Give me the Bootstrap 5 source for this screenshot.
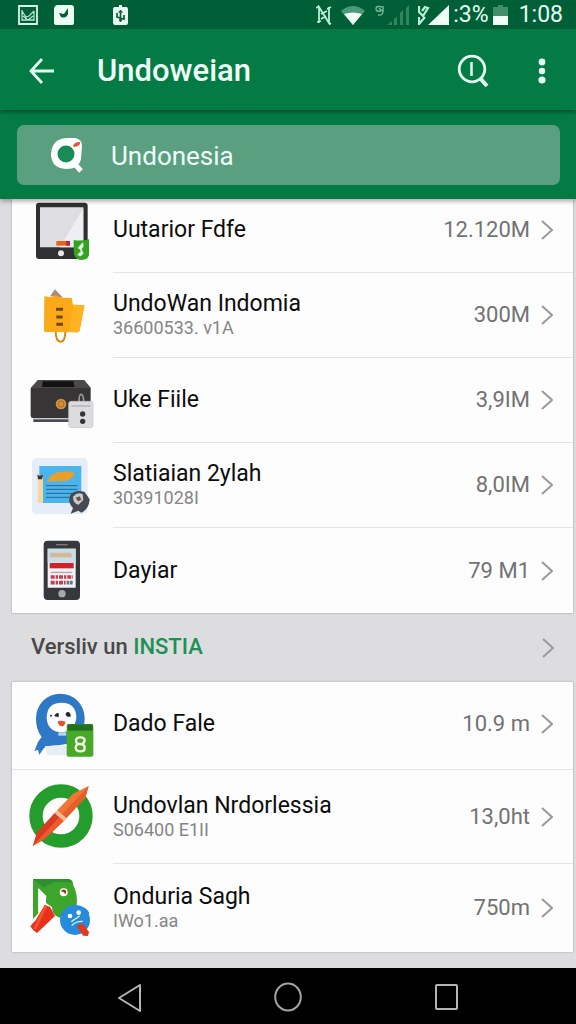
<!DOCTYPE html>
<html lang="id">
<head>
<meta charset="utf-8">
<meta name="viewport" content="width=device-width, initial-scale=1">
<title>Undoweian</title>
<link href="https://cdn.jsdelivr.net/npm/bootstrap@5.3.0/dist/css/bootstrap.min.css" rel="stylesheet">
<style>
  body { font-family: Roboto, "Noto Sans", sans-serif; background: #dddddf; color: #0c0c0c; }
  svg { display: block; flex: none; }
  .status-bar { background: #015f38; height: 29px; padding: 0 13px 0 18px; color: #e4fff2; font-size: 23px; line-height: 26px; }
  .gap-a { margin-left: 39px; }
  .gap-b { margin-left: 8px; }
  .gap-c { margin-left: 11px; }
  .app-bar { background: #047b45; height: 81px; padding: 2px 24px 0 28px; box-shadow: 0 2px 4px rgba(0,40,20,.55); z-index: 2; }
  .app-title { font-size: 31px; line-height: 40px; font-weight: 500; color: #eefff7; margin-left: 42px; }
  .plain-btn { border: 0; background: none; padding: 0; color: #e4fff2; }
  .more-btn { margin-left: 42px; }
  .search-area { background: #047b45; padding: 15px 16px 14px 17px; box-shadow: 0 2px 5px rgba(0,0,0,.35); z-index: 1; }
  .search-box { background: #5a9f80; border-radius: 7px; height: 60px; padding: 2px 32px 0; gap: 26px; }
  .search-box input { border: 0; background: none; outline: 0; color: #f0fff8; font-size: 26px; line-height: 32px; padding: 0; min-width: 0; }
  .panel { background: #fdfdfd; margin: 0 3px 0 12px; box-shadow: 0 0 2px rgba(0,0,0,.3); }
  .app-row { min-height: 85px; padding-left: 17px; gap: 18px; color: inherit; }
  .row-clipped { min-height: 74px; }
  .row-clipped .app-icon { margin: -2px 0 10px; }
  .row-clipped .row-main { padding-bottom: 12px; }
  .row-top { min-height: 88px; border-bottom: 1px solid #e4e4e6; }
  .row-tall { min-height: 94px; }
  .row-end { min-height: 88px; }
  .app-icon { width: 66px; height: 66px; overflow: visible; }
  .row-main { padding-right: 20px; gap: 11px; border-bottom: 1px solid #e4e4e6; }
  .row-top .row-main { padding-bottom: 4px; }
  .row-top .row-main, .row-last .row-main { border-bottom: 0; }
  .app-name { font-size: 23px; line-height: 26px; }
  .app-note { font-size: 18px; line-height: 22px; color: #858585; }
  .app-size { font-size: 22px; line-height: 26px; color: #727272; }
  .section-head { height: 69px; padding: 0 22px 0 31px; font-size: 22px; font-weight: 500; color: #48484a; }
  .brand { color: #1c9257; }
  .page-end { height: 16px; }
  .nav-keys { background: #000; height: 57px; padding: 0 50px; }
</style>
</head>
<body>
<svg width="0" height="0" class="position-absolute" aria-hidden="true">
  <symbol id="chevron" viewBox="0 0 12 20"><path d="M1 1l10 9-10 9" fill="none" stroke="#9a9a9c" stroke-width="2"/></symbol>
</svg>
<div class="d-flex flex-column min-vh-100">

  <div class="status-bar d-flex align-items-center">
    <svg width="20" height="20" viewBox="0 0 20 20"><path d="M1 1h18v18H1z" fill="none" stroke="#d9f7e8" stroke-width="1.8"/><path d="M4 5v10h12V6M4 6l4 6 3-1 5-5M5 11l5 4 5-4" fill="none" stroke="#b5e6ce" stroke-width="1.3"/></svg>
    <svg class="ms-3" width="20" height="20" viewBox="0 0 20 20"><path d="M3 0h14q3 0 3 3v15q0 2-2 2H2q-2 0-2-2V4q0-3 3-4z" fill="#e9fff4"/><path d="M5 8l5 1 4-6 0 6q-2 5-7 3z" fill="#0b5937"/></svg>
    <svg class="me-auto gap-a" width="15" height="20" viewBox="0 0 15 20"><path d="M2 2h4V0h3v2h4q2 0 2 2v14q0 2-2 2H2q-2 0-2-2V4q0-2 2-2z" fill="#e9fff4"/><path d="M7.500 5v12M4 8v4l7 2v-4M5.500 7h4M6 15h3" stroke="#155b3e" fill="none" stroke-width="1.700"/></svg>
    <svg width="16" height="20" viewBox="0 0 16 20"><path d="M3 18V2l10 16V2M0 3l3-2M13 18l2 1M1 17l4-1M11 4l4-2M5 9l6-3M5 14l5-3" fill="none" stroke="#b9f0d6" stroke-width="1.800"/></svg>
    <svg class="gap-b" width="26" height="20" viewBox="0 0 26 20"><path d="M1 6Q13-4 25 6L13 20z" fill="#4e9978"/><path d="M4 9q9-3 18 0l-9 11z" fill="#effff8"/></svg>
    <svg class="gap-b" width="36" height="20" viewBox="0 0 36 20"><path d="M8 2q-6-2-6 2 0 3 5 2M9 1v5q0 5-5 4M5 3l3 3" fill="none" stroke="#7abb9b" stroke-width="1.400"/><path d="M13 20l5-4v4zM20 20v-6l3-2v8zM26 20V8l3-3v15zM32 20V3l3-3v20z" fill="#32865e"/></svg>
    <svg class="gap-b" width="31" height="20" viewBox="0 0 31 20"><path d="M1 1v6l4 4 5-8-3-1-3 4M1 12v7l6-7" fill="none" stroke="#b9f0d6" stroke-width="2.200"/><path d="M31 0v20H10z" fill="#effff8"/></svg>
    <span class="ms-1">:3%</span>
    <svg class="ms-1" width="15" height="20" viewBox="0 0 15 20"><path d="M0 2h5V0h5v2h5v9H0z" fill="#438e6b"/><path d="M0 11h15v9H0z" fill="#effff8"/></svg>
    <span class="gap-c">1:08</span>
  </div>

  <header class="app-bar d-flex align-items-center position-relative">
    <button class="plain-btn" type="button" aria-label="Kembali"><svg width="27" height="28" viewBox="0 0 27 28"><path d="M14 2L3 14l11 12M3 14h23" fill="none" stroke="currentColor" stroke-width="2.800"/></svg></button>
    <h1 class="app-title mb-0 me-auto">Undoweian</h1>
    <button class="plain-btn" type="button" aria-label="Cari"><svg width="33" height="34" viewBox="0 0 33 34"><circle cx="15" cy="15" r="12.800" fill="none" stroke="currentColor" stroke-width="2.800"/><path d="M14.500 8v14" stroke="currentColor" stroke-width="2.500"/><path d="M23 24l7 8" stroke="currentColor" stroke-width="4"/></svg></button>
    <button class="plain-btn more-btn" type="button" aria-label="Menu"><svg width="20" height="26" viewBox="0 0 20 26"><g fill="currentColor"><circle cx="10" cy="4" r="3.400"/><circle cx="10" cy="13" r="3.200"/><circle cx="10" cy="22" r="3.600"/></g></svg></button>
  </header>

  <form class="search-area position-relative">
    <div class="search-box d-flex align-items-center">
      <label for="q" aria-label="Cari"><svg width="36" height="38" viewBox="0 0 36 38"><path d="M17 1h9q7 1 7 8l-1 13Q30 32 17 32 2 31 2 17 3 2 17 1z" fill="#fff"/><circle cx="17" cy="17" r="8.500" fill="#178b58"/><path d="M23 24l9 10" stroke="#fff" stroke-width="5"/><path d="M24 9q1-4 7-4 1 4-6 5z" fill="#e2553b"/></svg></label>
      <input id="q" class="flex-grow-1" type="text" value="Undonesia">
    </div>
  </form>

  <main>
    <section class="panel">
      <a href="#" class="app-row row-clipped d-flex align-items-center text-decoration-none">
        <svg class="app-icon" viewBox="57 6 198 198"><rect x="78" y="23" width="155" height="169" rx="9" fill="#303033"/><path d="M90 37h130v120H90z" fill="#dedee2"/><path d="M220 40v117h-70z" fill="#efeff1"/><path d="M139 138h40v14h-40z" fill="#e5661b"/><path d="M168 138h12v14h-12z" fill="#bd293a"/><circle cx="153" cy="175" r="9" fill="#e8e8e8"/><path d="M191 135q22 4 46-2v48q-4 14-26 14-19-4-20-25z" fill="#35a221"/><path d="M218 143l-14 16 13 7-14 13q11 8 17-5-4-8-9-7l9-14z" fill="#e4ffe1" stroke="#e4ffe1" stroke-width="2"/></svg>
        <div class="row-main d-flex align-items-center align-self-stretch flex-grow-1"><div class="me-auto app-name">Uutarior Fdfe</div><span class="app-size">12.120M</span><svg width="12" height="20"><use href="#chevron"/></svg></div>
      </a>
      <a href="#" class="app-row d-flex align-items-center text-decoration-none">
        <svg class="app-icon" viewBox="57 264 198 198"><path d="M120 304l15-21 24 25z" fill="#a58e80"/><path d="M137 408q0 32 15 32 14 0 14-32" fill="none" stroke="#d98a17" stroke-width="6"/><path d="M103 304l22 3 10-6 20 7 30 1 4 20 34 2-15 76q-2 5-8 5l-95-1q-3-1-3-6z" fill="#fba918"/><path d="M190 329l34 2-15 76q-2 5-8 5l-24-1z" fill="#ffb321"/><path d="M138 343h21M139 366h19M139 388h20" stroke="#6f4a17" stroke-width="9"/></svg>
        <div class="row-main d-flex align-items-center align-self-stretch flex-grow-1"><div class="me-auto"><div class="app-name">UndoWan Indomia</div><div class="app-note">36600533. v1A</div></div><span class="app-size">300M</span><svg width="12" height="20"><use href="#chevron"/></svg></div>
      </a>
      <a href="#" class="app-row d-flex align-items-center text-decoration-none">
        <svg class="app-icon" viewBox="57 24 198 198"><path d="M84 60h138l20 24v85q-2 6-8 6H70q-8-1-8-8V86z" fill="#373536"/><path d="M84 60h138l20 24H62z" fill="#4b494a"/><path d="M98 64h92l4 17H96z" fill="#111"/><path d="M70 182h110" stroke="#4b4858" stroke-width="8"/><circle cx="153" cy="132" r="16" fill="#d29138"/><circle cx="153" cy="132" r="9" fill="none" stroke="#a66d22" stroke-width="3"/><path d="M207 126q0-23 6-23 8 0 8 23" fill="none" stroke="#999" stroke-width="5"/><rect x="176" y="124" width="73" height="79" rx="7" fill="#dcdcdf" stroke="#c6c6c9" stroke-width="2"/><path d="M184 138h57" stroke="#b9b9bc" stroke-width="5"/><circle cx="218" cy="162" r="8" fill="#343438"/><circle cx="218" cy="184" r="8" fill="#343438"/></svg>
        <div class="row-main d-flex align-items-center align-self-stretch flex-grow-1"><div class="me-auto app-name">Uke Fiile</div><span class="app-size">3,9IM</span><svg width="12" height="20"><use href="#chevron"/></svg></div>
      </a>
      <a href="#" class="app-row d-flex align-items-center text-decoration-none">
        <svg class="app-icon" viewBox="57 276 198 198"><rect x="66" y="291" width="167" height="168" rx="14" fill="#e5eef8"/><path d="M88 315h126v111H88z" fill="#4bb4ec"/><path d="M110 362q13-29 45-29 20-4 40 3-6 21-35 25-28-2-50 1z" fill="#e9a02a"/><path d="M108 374h94M108 385h94M108 397h94M108 409h86" stroke="#26658f" stroke-width="3"/><path d="M83 348h16v78H83z" fill="#f5d8a1"/><path d="M82 340l7 5 10-4-3 14H84z" fill="#45331e"/><path d="M182 400q17-16 42-7l15 22q-1 28-25 40l-9-6-23 9 7-17q-18-18-7-41z" fill="#454a52"/><path d="M189 407q15-16 29-7l2 16-14 15q-17-3-17-24z" fill="#c7c9cd"/><path d="M197 410l12-4 5 10-10 5z" fill="#6d4d45"/></svg>
        <div class="row-main d-flex align-items-center align-self-stretch flex-grow-1"><div class="me-auto"><div class="app-name">Slatiaian 2ylah</div><div class="app-note">30391028I</div></div><span class="app-size">8,0IM</span><svg width="12" height="20"><use href="#chevron"/></svg></div>
      </a>
      <a href="#" class="app-row row-last d-flex align-items-center text-decoration-none">
        <svg class="app-icon" viewBox="57 51 198 198"><rect x="101" y="59" width="109" height="178" rx="12" fill="#37383b"/><path d="M138 71h35" stroke="#77797c" stroke-width="4"/><path d="M113 83h84v117h-84z" fill="#edf5f8"/><path d="M113 83h84v42h-84z" fill="#c6dee6"/><path d="M120 95h62l6 14h-68z" fill="#d6b69d"/><path d="M119 126h72v16h-72z" fill="#d71f24"/><path d="M122 154h65" stroke="#d27d85" stroke-width="3"/><path d="M122 168h67M122 185h45" stroke="#cb3d4b" stroke-width="11" stroke-dasharray="12 3 7 3"/><path d="M170 185h18" stroke="#746c83" stroke-width="11" stroke-dasharray="8 2"/><circle cx="156" cy="218" r="11" fill="#a8a9aa"/></svg>
        <div class="row-main d-flex align-items-center align-self-stretch flex-grow-1"><div class="me-auto app-name">Dayiar</div><span class="app-size">79 M1</span><svg width="12" height="20"><use href="#chevron"/></svg></div>
      </a>
    </section>

    <h2 class="section-head d-flex align-items-center mb-0"><span class="me-auto">Versliv un <span class="brand">INSTIA</span></span><svg width="12" height="20"><use href="#chevron"/></svg></h2>

    <section class="panel">
      <a href="#" class="app-row row-top d-flex align-items-center text-decoration-none">
        <svg class="app-icon" viewBox="57 36 198 198"><path d="M151 38a73 73 0 0 1 73 73q0 50-42 76l-36 6q-30-1-44 8l-14 20-4-15-11 5 11-28 11-15q-18-24-17-57a73 73 0 0 1 73-73z" fill="#2d79c6"/><path d="M105 195h66v28h-60z" fill="#e8edf5"/><path d="M110 110q1-45 45-45 44 1 44 46-6 41-44 43-43-3-45-44z" fill="#fff"/><circle cx="123" cy="104" r="3" fill="#24252c"/><path d="M134 105q2-8 11-8v10zM168 102q-1-8 6-8 8 1 7 12-10 2-13-4z" fill="#24252c" stroke="#24252c" stroke-width="2"/><path d="M143 121q12-4 23 1-1 14-12 14-9-2-11-15z" fill="#e6502c"/><path d="M145 154h24v10h-24z" fill="#bcd6f1"/><rect x="170" y="129" width="80" height="98" rx="6" fill="#47a925"/><path d="M173 130h75v19h-75z" fill="#236f24"/><path d="M224 176q-2-7-13-7-13 0-13 10t13 10q13 1 13 11 0 11-13 11-13 0-14-11 0-8 8-11M215 189q9-3 9-13" fill="none" stroke="#f5ffe9" stroke-width="7"/></svg>
        <div class="row-main d-flex align-items-center align-self-stretch flex-grow-1"><div class="me-auto app-name">Dado Fale</div><span class="app-size">10.9 m</span><svg width="12" height="20"><use href="#chevron"/></svg></div>
      </a>
      <a href="#" class="app-row row-tall d-flex align-items-center text-decoration-none">
        <svg class="app-icon" viewBox="57 309 198 198"><circle cx="153" cy="405" r="75" fill="none" stroke="#259d2c" stroke-width="40"/><path d="M236 315l-10 35-65 70-27-24 55-58z" fill="#ef7636"/><path d="M68 495l13-41 53-58 27 24-57 54z" fill="#d93c20"/><path d="M236 315l-88 93 13 12 65-70z" fill="#e4602a"/><path d="M68 495l80-87 13 12-57 54z" fill="#ed5a2c"/><path d="M134 396l27 24 8-9-27-23z" fill="#f6ba93"/></svg>
        <div class="row-main d-flex align-items-center align-self-stretch flex-grow-1"><div class="me-auto"><div class="app-name">Undovlan Nrdorlessia</div><div class="app-note">S06400 E1II</div></div><span class="app-size">13,0ht</span><svg width="12" height="20"><use href="#chevron"/></svg></div>
      </a>
      <a href="#" class="app-row row-end row-last d-flex align-items-center text-decoration-none">
        <svg class="app-icon" viewBox="57 72 198 198"><path d="M69 84h108q13 3 13 19 14 28 10 59-8 30-37 40-36-2-37-34l-18-12q2-18-14-34l-9-9v74l-16 17z" fill="#3da52c"/><path d="M85 111l24 24-2 23-22 26z" fill="#fff"/><path d="M69 84h108l9 10-53-1-31 16-18-13z" fill="#2f8d32"/><path d="M104 162l16 5 15 28-54 51q-15-10-20-20 8-12 15-17z" fill="#e8301c"/><path d="M104 162l8 4-34 70-7-4z" fill="#f25529"/><circle cx="161" cy="124" r="12" fill="#fff"/><path d="M152 120q8-9 17-1l-2 11q-4-8-15-10z" fill="#9a3a18"/><circle cx="195" cy="207" r="45" fill="#268bdb"/><path d="M210 166q20 3 28 20l-14 25-20-15z" fill="#268bdb"/><circle cx="180" cy="195" r="7" fill="#fff"/><circle cx="206" cy="185" r="7" fill="#fff"/><path d="M184 212l25-17M185 224q12-14 33-13" fill="none" stroke="#d7efff" stroke-width="4"/><path d="M199 226l18-10 20 27-3 12-14-1z" fill="#dd3a20"/></svg>
        <div class="row-main d-flex align-items-center align-self-stretch flex-grow-1"><div class="me-auto"><div class="app-name">Onduria Sagh</div><div class="app-note">IWo1.aa</div></div><span class="app-size">750m</span><svg width="12" height="20"><use href="#chevron"/></svg></div>
      </a>
    </section>
    <div class="page-end"></div>
  </main>

  <nav class="nav-keys d-flex align-items-center justify-content-around mt-auto" aria-label="Sistem">
    <button class="plain-btn" type="button" aria-label="Kembali"><svg width="26" height="32" viewBox="0 0 26 32"><path d="M24 4v26L3 17z" fill="none" stroke="#b5b5b5" stroke-width="2" stroke-linejoin="round"/></svg></button>
    <button class="plain-btn" type="button" aria-label="Beranda"><svg width="28" height="32" viewBox="0 0 28 32"><ellipse cx="14" cy="16" rx="12.800" ry="13.500" fill="none" stroke="#a5a5a5" stroke-width="2"/></svg></button>
    <button class="plain-btn" type="button" aria-label="Terbaru"><svg width="26" height="30" viewBox="0 0 26 30"><rect x="2" y="3" width="21" height="24" rx="1" fill="none" stroke="#b5b5b5" stroke-width="2"/></svg></button>
  </nav>
</div>
<script src="https://cdn.jsdelivr.net/npm/bootstrap@5.3.0/dist/js/bootstrap.bundle.min.js"></script>
</body>
</html>
